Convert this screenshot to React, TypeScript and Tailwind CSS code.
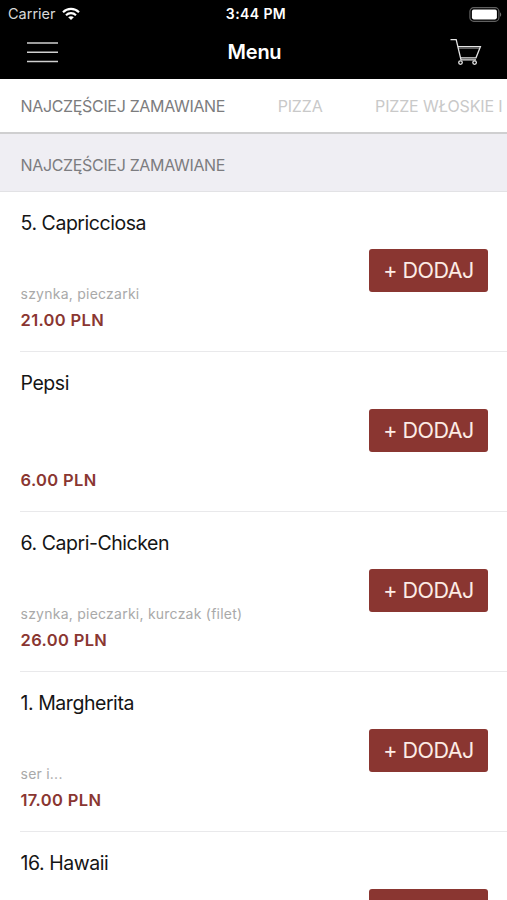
type MenuItem = {
  name: string
  description?: string
  price?: string
}

const categories = ["PIZZA", "PIZZE WŁOSKIE I"]

const items: MenuItem[] = [
  { name: "5. Capricciosa", description: "szynka, pieczarki", price: "21.00 PLN" },
  { name: "Pepsi", price: "6.00 PLN" },
  { name: "6. Capri-Chicken", description: "szynka, pieczarki, kurczak (filet)", price: "26.00 PLN" },
  { name: "1. Margherita", description: "ser i...", price: "17.00 PLN" },
  { name: "16. Hawaii" },
]

function WifiIcon() {
  return (
    <svg width="18" height="14" viewBox="0 0 18 14" fill="none" stroke="white" strokeWidth="2.1">
      <path d="M1 5.2C5.4 0.7 12.6 0.7 17 5.2" />
      <path d="M4 8.2c2.8-2.8 7.2-2.8 10 0" />
      <path d="M6.2 10.3c1.6-1.5 4-1.5 5.6 0L9 13z" fill="white" stroke="none" />
    </svg>
  )
}

function BatteryIcon() {
  return (
    <svg width="33" height="15" viewBox="0 0 33 15" fill="none">
      <rect x="0.9" y="0.7" width="29" height="13.6" rx="3.8" stroke="#606060" strokeWidth="1.2" />
      <rect x="2.9" y="2.6" width="25" height="9.8" rx="1.8" fill="white" />
      <path d="M31 5.2c1.6.7 1.6 3.9 0 4.6z" fill="#6b6b6b" />
    </svg>
  )
}

function HamburgerIcon() {
  return (
    <svg width="31" height="22" viewBox="0 0 31 22" stroke="#d0d0d0" strokeWidth="1.5">
      <path d="M0 2h31M0 11.3h31M0 20.5h31" />
    </svg>
  )
}

function CartIcon() {
  return (
    <svg width="32" height="28" viewBox="0 0 32 28" fill="none" stroke="#e4e4e4" strokeWidth="1.3">
      <path d="M0.5 1.6h5.7L11 21.8h15" />
      <path d="M7.8 8.7h22.6L26 19.8H10.6" />
      <path d="M8 10.2h21" strokeWidth="0.6" />
      <circle cx="10.5" cy="24.6" r="1.8" />
      <circle cx="24.6" cy="24.6" r="1.8" />
    </svg>
  )
}

function Header() {
  return (
    <header className="h-[79px] shrink-0 bg-black text-white">
      <div className="grid h-7 grid-cols-3 items-center pr-[5px] pl-2">
        <div className="flex items-center gap-[6px]">
          <span className="text-[14.5px] text-[#d8d8d8]">Carrier</span>
          <WifiIcon />
        </div>
        <span className="pl-0.5 text-center text-[14px] leading-4 font-semibold tracking-[0.4px]">3:44 PM</span>
        <div className="flex justify-end">
          <BatteryIcon />
        </div>
      </div>
      <div className="grid h-[48px] grid-cols-3 items-center pr-[25px] pl-[27px]">
        <button aria-label="Menu">
          <HamburgerIcon />
        </button>
        <h1 className="text-center text-[20px] leading-[26px] font-semibold tracking-[-0.25px]">Menu</h1>
        <button aria-label="Koszyk" className="flex justify-end">
          <CartIcon />
        </button>
      </div>
    </header>
  )
}

function MenuRow({ item }: { item: MenuItem }) {
  return (
    <li className="ml-5 flex h-40 border-b border-[#e9e9eb] pr-[19px]">
      <div className="flex flex-1 flex-col pt-[18px] pl-[0.5px]">
        <h3 className="text-[19.5px] leading-[26px] tracking-[-0.45px] text-[#151515]">{item.name}</h3>
        <p className="mt-[48px] h-5 text-[14px] leading-5 tracking-[0.24px] text-[#a9a9a9]">{item.description}</p>
        <p className="mt-1 text-[16.5px] leading-6 font-semibold tracking-[0.35px] text-[#8a3631]">{item.price}</p>
      </div>
      <button className="mt-[57px] h-[43px] w-[119px] rounded-[3px] bg-[#8a3631] text-[21.5px] tracking-[-0.5px] text-[#fdece6]">
        + DODAJ
      </button>
    </li>
  )
}

export default function App() {
  return (
    <div className="flex h-[900px] w-[507px] flex-col overflow-hidden bg-white font-['Inter',sans-serif]">
      <Header />
      <nav className="flex h-[55px] shrink-0 items-center gap-[52.5px] overflow-hidden border-b-2 border-[#cfcfd0] pl-[20.5px] text-[16px] whitespace-nowrap">
        <span className="tracking-[-0.33px] text-[#7c7c7e]">NAJCZĘŚCIEJ ZAMAWIANE</span>
        {categories.map((category) => (
          <span key={category} className="tracking-[-0.15px] text-[#c9c9c9]">
            {category}
          </span>
        ))}
      </nav>
      <h2 className="flex h-[58px] shrink-0 items-center border-b border-[#e2e2e5] bg-[#efeef3] pt-1 pl-[20.5px] text-[16px] tracking-[-0.33px] text-[#7c7c80]">
        NAJCZĘŚCIEJ ZAMAWIANE
      </h2>
      <ul>
        {items.map((item) => (
          <MenuRow key={item.name} item={item} />
        ))}
      </ul>
    </div>
  )
}
